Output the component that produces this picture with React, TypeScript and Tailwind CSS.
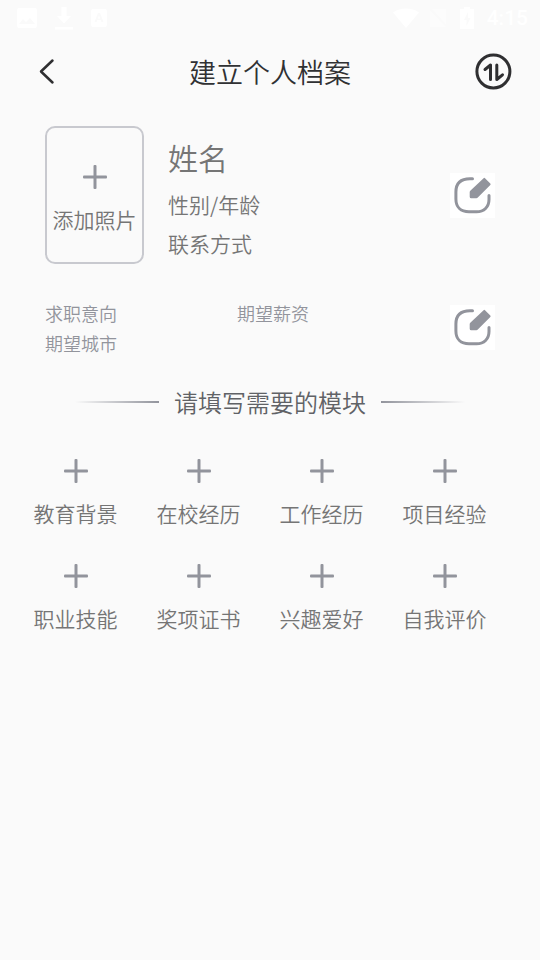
import React from "react";

interface IconProps {
  className?: string;
}

interface EditButtonProps {
  label: string;
}

const modules: string[] = [
  "教育背景",
  "在校经历",
  "工作经历",
  "项目经验",
  "职业技能",
  "奖项证书",
  "兴趣爱好",
  "自我评价",
];

const PlusIcon: React.FC<IconProps> = ({ className }) => (
  <svg viewBox="0 0 24 24" className={className} fill="#92949c" aria-hidden="true">
    <rect x="0" y="10.5" width="24" height="3" rx="1" />
    <rect x="10.5" y="0" width="3" height="24" rx="1" />
  </svg>
);

const EditButton: React.FC<EditButtonProps> = ({ label }) => (
  <button type="button" aria-label={label} className="size-[45px] shrink-0 bg-white">
    <svg viewBox="0 0 45 45" className="size-full" fill="none" aria-hidden="true">
      <path
        d="M22.500 5.700H20C10 5.700 5.900 11 5.900 19v7C5.900 34 11 38.800 19 38.800h7.500C34 38.800 39 34 39 26.500v-4"
        stroke="#92949c"
        strokeWidth="3"
        strokeLinecap="round"
      />
      <path
        d="M33.600 5.200a1 1 0 0 1 1.400 0l5.300 5.300a1 1 0 0 1 0 1.400L27.800 24.600a2 2 0 0 1-1.400.6h-5.200a1.500 1.500 0 0 1-1.500-1.500v-4.600a2 2 0 0 1 .6-1.400Z"
        fill="#92949c"
      />
    </svg>
  </button>
);

const StatusBar: React.FC = () => (
  <div className="flex h-9 items-center justify-between pl-[17px] pr-3 text-white">
    <div className="flex items-center gap-[18px]">
      <svg viewBox="0 0 20 20" className="size-5" aria-hidden="true">
        <path
          fill="currentColor"
          fillRule="evenodd"
          d="M2 0h16a2 2 0 0 1 2 2v16a2 2 0 0 1-2 2H2a2 2 0 0 1-2-2V2a2 2 0 0 1 2-2Zm0 16h16l-5-6-4 4-3-3Z"
        />
      </svg>
      <svg viewBox="0 0 18 24" className="h-6 w-[18px]" fill="currentColor" aria-hidden="true">
        <path d="M6.500 1h5v9H16l-7 7.500L2 10h4.500ZM0 21h18v2.500H0Z" />
      </svg>
      <svg viewBox="0 0 18 20" className="h-5 w-[18px]" aria-hidden="true">
        <path
          fill="currentColor"
          fillRule="evenodd"
          d="M2 1h12a2 2 0 0 1 2 2v14a2 2 0 0 1-2 2H2a2 2 0 0 1-2-2V3a2 2 0 0 1 2-2Zm5 4L3.500 14h2l.7-2h3.600l.7 2h2L9 5Zm1 2.500L9.200 10.500H6.800Z"
        />
      </svg>
    </div>
    <div className="flex items-center gap-[10px]">
      <svg viewBox="0 0 26 21" className="h-[21px] w-[26px]" fill="currentColor" aria-hidden="true">
        <path d="M13 20 0 4.500C7-1 19-1 26 4.500Z" />
      </svg>
      <svg viewBox="0 0 18 20" className="h-5 w-[18px] opacity-40" fill="currentColor" aria-hidden="true">
        <path d="M3 1h14v15.500ZM1 2l16 17H1Z" />
      </svg>
      <svg viewBox="0 0 20 22" className="h-[22px] w-5" aria-hidden="true">
        <path
          fill="currentColor"
          fillRule="evenodd"
          d="M7 0h6v2h4v20H3V2h4Zm4 5-4 8h2.500v6l4-8H11Z"
        />
      </svg>
      <span className="font-[Roboto,sans-serif] text-[21px] font-medium leading-none">
        4:15
      </span>
    </div>
  </div>
);

const Header: React.FC = () => (
  <header className="flex h-[72px] items-center justify-between px-7">
    <button type="button" aria-label="返回" className="flex size-9 items-center justify-center">
      <svg viewBox="0 0 36 36" className="size-9" fill="none" aria-hidden="true">
        <path
          d="M24.500 6.500 13 17.500l11.500 11"
          stroke="#2f2f31"
          strokeWidth="2.500"
          strokeLinecap="round"
          strokeLinejoin="round"
        />
      </svg>
    </button>
    <h1 className="text-[27px] leading-9 text-[#303133]">建立个人档案</h1>
    <button type="button" aria-label="排序" className="size-9">
      <svg
        viewBox="0 0 36 36"
        className="size-9 overflow-visible"
        fill="none"
        stroke="#2f2f31"
        strokeWidth="3"
        strokeLinecap="round"
        strokeLinejoin="round"
        aria-hidden="true"
      >
        <circle cx="17.400" cy="17.500" r="16.500" />
        <path d="M9 15.500 14.500 11v14.500M20.800 11v14.500l5.700-4.700" />
      </svg>
    </button>
  </header>
);

const App: React.FC = () => {
  return (
    <div className="min-h-screen bg-[#fafafa] font-['Noto_Sans_CJK_SC',sans-serif] font-[350] text-[#757575]">
      <StatusBar />
      <Header />
      <main className="pt-[18px]">
        <section className="flex items-center px-[45px]">
          <button
            type="button"
            className="flex h-[138px] w-[99px] shrink-0 flex-col items-center justify-center gap-[15px] rounded-[10px] border-2 border-[#c8c9cf] pt-2"
          >
            <PlusIcon className="size-6" />
            <span className="whitespace-nowrap text-[21px] leading-[30px]">添加照片</span>
          </button>
          <div className="ml-6 flex-1 pt-1.5">
            <h2 className="mb-1 text-[30px] leading-[48px]">姓名</h2>
            <p className="text-[21px] leading-[39px]">性别/年龄</p>
            <p className="text-[21px] leading-[39px]">联系方式</p>
          </div>
          <EditButton label="编辑个人信息" />
        </section>

        <section className="mt-8 flex items-center px-[45px] text-[18px] leading-[30px] text-[#92949c]">
          <div className="grid flex-1 grid-cols-[192px_1fr] pt-0.5">
            <p>求职意向</p>
            <p>期望薪资</p>
            <p>期望城市</p>
          </div>
          <EditButton label="编辑求职意向" />
        </section>

        <div className="mt-[26px] flex items-center justify-center gap-[15px]">
          <span className="h-0.5 w-[84px] bg-linear-to-r from-[#fafafa] to-[#92949c]" />
          <h2 className="text-2xl leading-9 text-[#606266]">请填写需要的模块</h2>
          <span className="h-0.5 w-[84px] bg-linear-to-l from-[#fafafa] to-[#92949c]" />
        </div>

        <div className="mt-[39px] grid grid-cols-4 gap-y-9 pl-[14px] pr-[34px]">
          {modules.map((name) => (
            <button key={name} type="button" className="flex flex-col items-center gap-[15px]">
              <PlusIcon className="size-6" />
              <span className="text-[21px] leading-[30px]">{name}</span>
            </button>
          ))}
        </div>
      </main>
    </div>
  );
};

export default App;
